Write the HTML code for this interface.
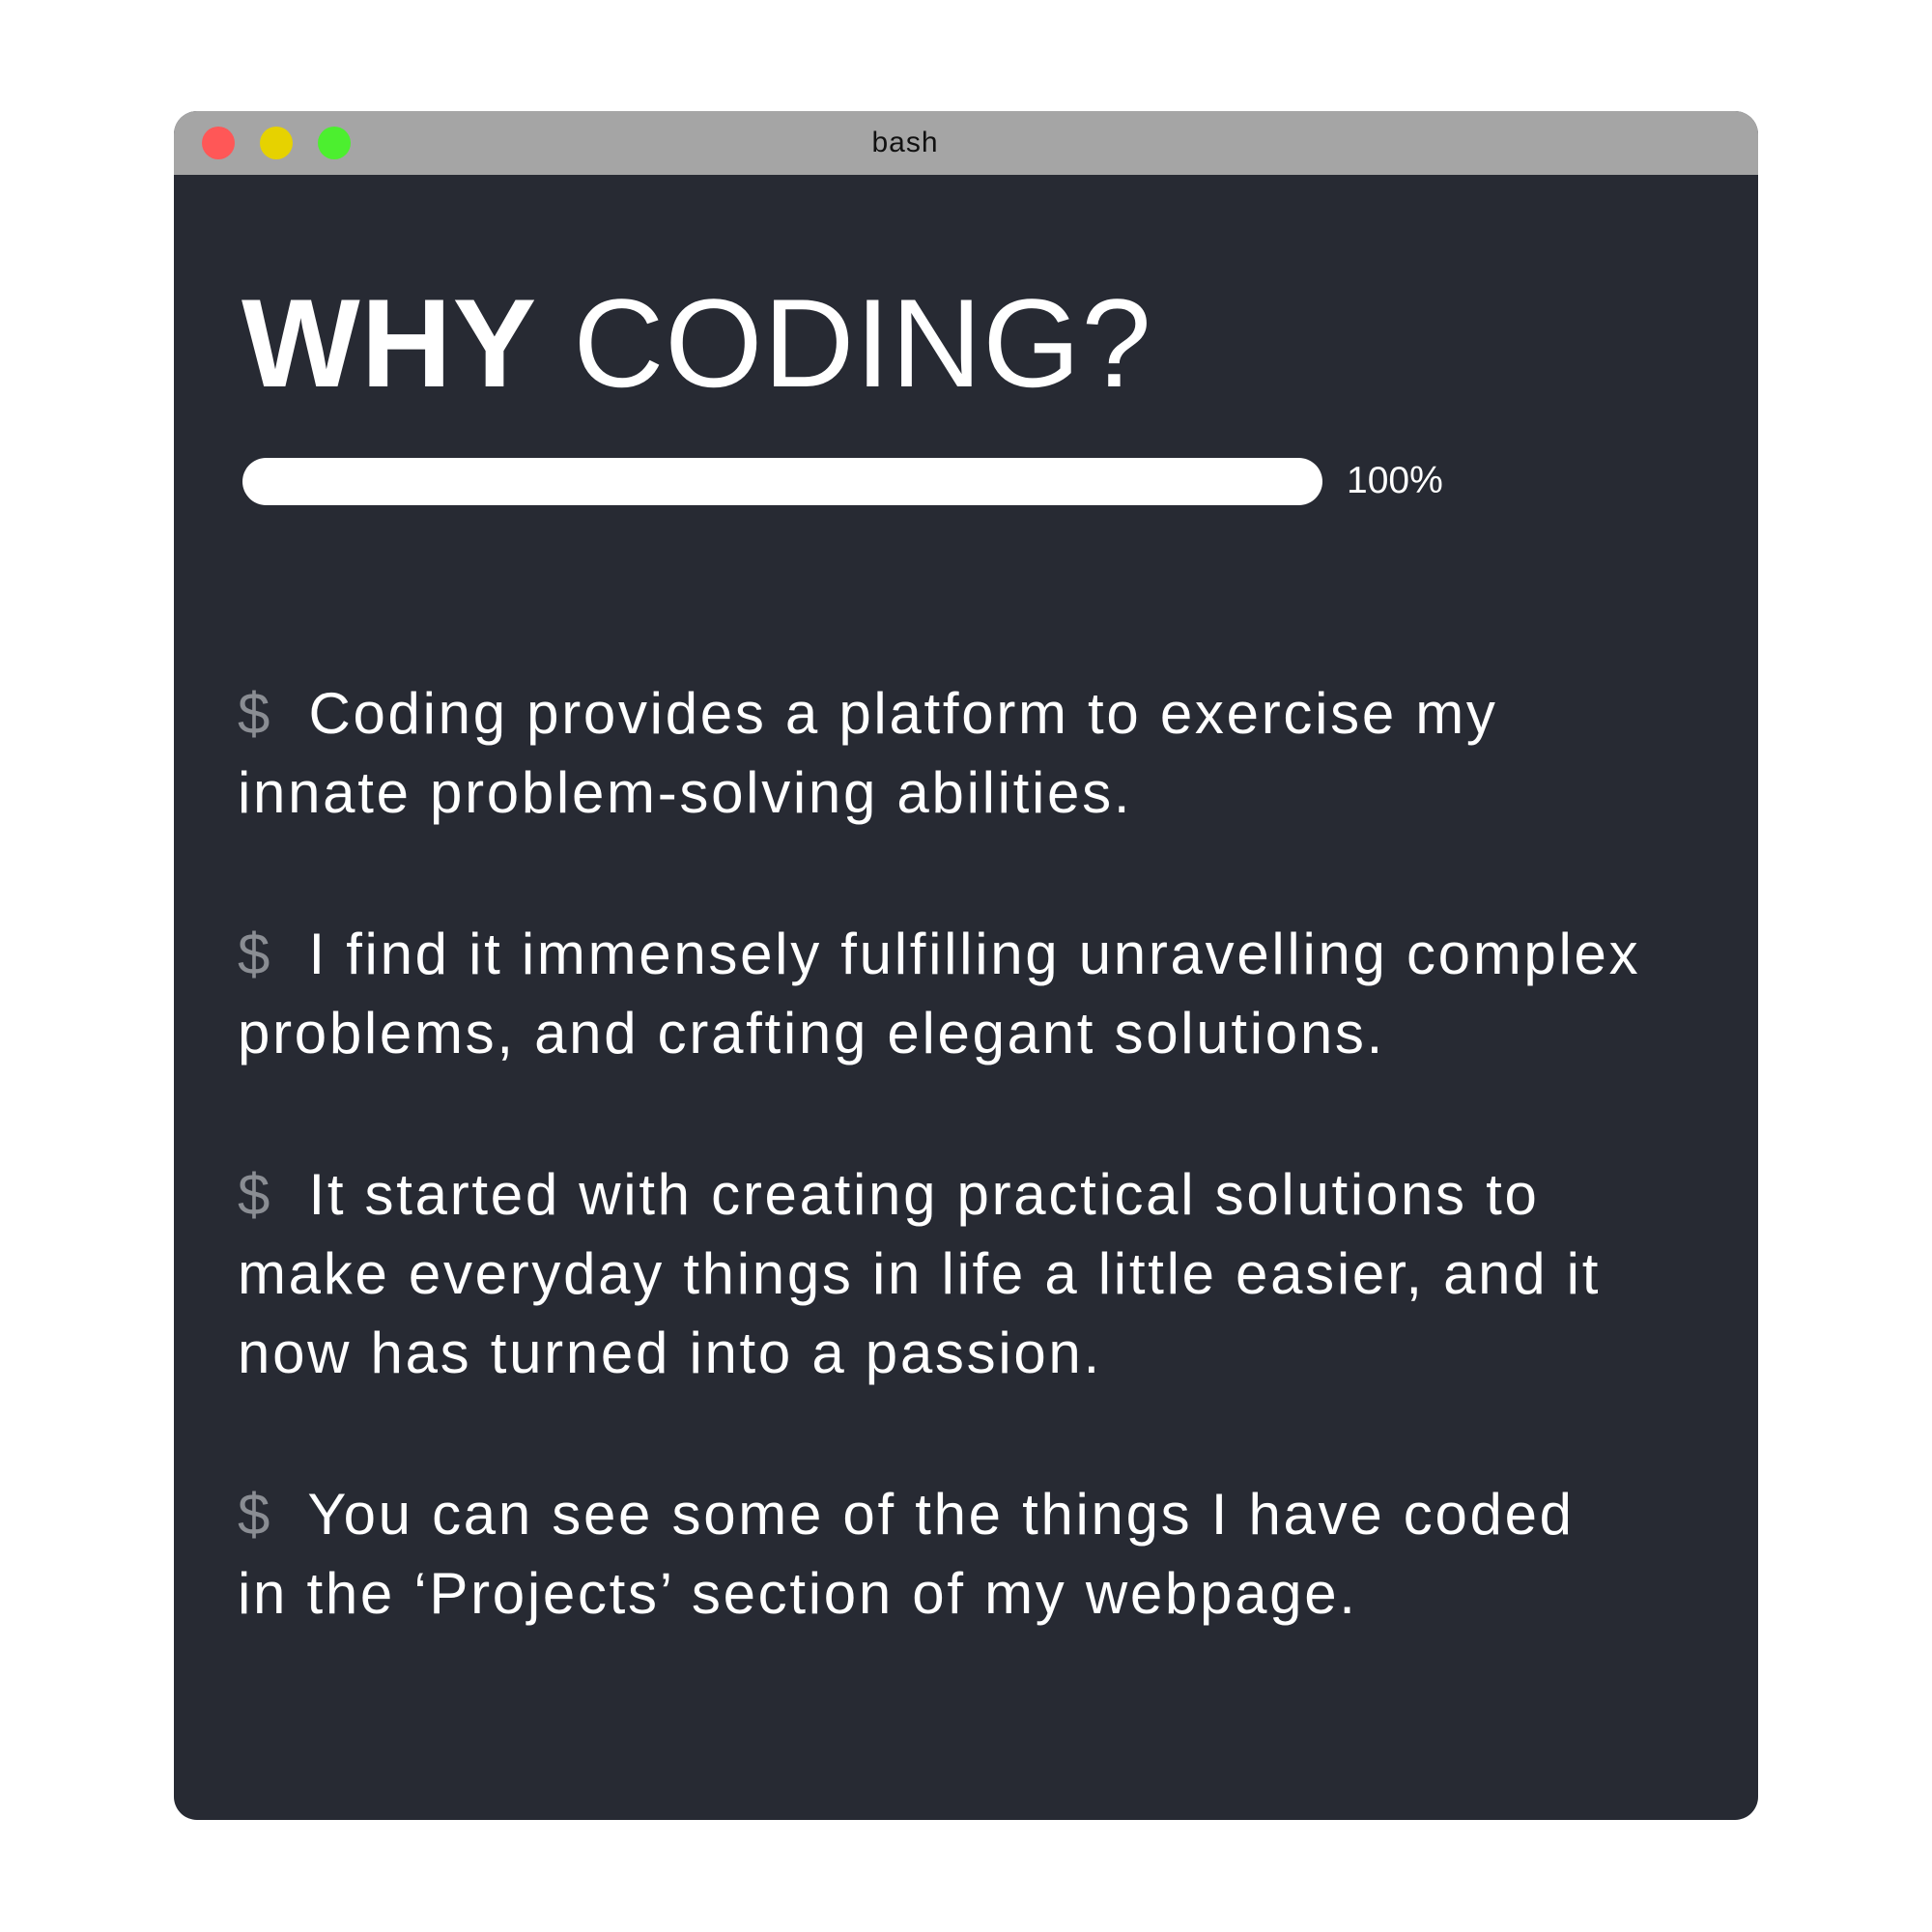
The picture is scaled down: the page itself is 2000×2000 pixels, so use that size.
<!DOCTYPE html>
<html><head><meta charset="utf-8"><style>
html,body{margin:0;padding:0;background:#fff;}
body{width:2000px;height:2000px;position:relative;overflow:hidden;font-family:"Liberation Sans",sans-serif;}
.win{position:absolute;left:180px;top:115px;width:1640px;height:1769px;background:#272a33;border-radius:24px;overflow:hidden;}
.bar{position:absolute;left:0;top:0;width:100%;height:66px;background:#a5a5a5;}
.dot{position:absolute;top:16px;width:34px;height:34px;border-radius:50%;}
.bash{position:absolute;left:837px;width:200px;top:131px;text-align:center;font-size:30px;color:#111;letter-spacing:1px;}
.title{position:absolute;left:250px;top:290px;font-size:130px;color:#fff;white-space:nowrap;line-height:1;letter-spacing:1px;}
.title b{font-weight:900;}
.prog{position:absolute;left:251px;top:474px;width:1118px;height:49px;background:#fff;border-radius:25px;}
.pct{position:absolute;left:1394px;top:476px;font-size:39px;color:#fff;}
.t{position:absolute;left:246px;font-size:60px;color:#fff;white-space:nowrap;line-height:1;letter-spacing:2.7px;}
.d{color:#8a8d93;margin-right:18px;}
</style></head><body>
<div class="win">
<div class="bar">
<div class="dot" style="left:29px;background:#ff5757"></div>
<div class="dot" style="left:89px;background:#e6d200"></div>
<div class="dot" style="left:149px;background:#4cef2f"></div>
</div>
</div>
<div class="bash">bash</div>
<div class="title"><b>WHY</b> CODING?</div>
<div class="prog"></div>
<div class="pct">100%</div>
<div class="t" style="top:709px"><span class="d">$</span> Coding provides a platform to exercise my</div>
<div class="t" style="top:791px">innate problem-solving abilities.</div>
<div class="t" style="top:958px"><span class="d">$</span> I find it immensely fulfilling unravelling complex</div>
<div class="t" style="top:1040px">problems, and crafting elegant solutions.</div>
<div class="t" style="top:1207px"><span class="d">$</span> It started with creating practical solutions to</div>
<div class="t" style="top:1289px">make everyday things in life a little easier, and it</div>
<div class="t" style="top:1371px">now has turned into a passion.</div>
<div class="t" style="top:1538px"><span class="d">$</span> You can see some of the things I have coded</div>
<div class="t" style="top:1620px">in the ‘Projects’ section of my webpage.</div>
</body></html>
